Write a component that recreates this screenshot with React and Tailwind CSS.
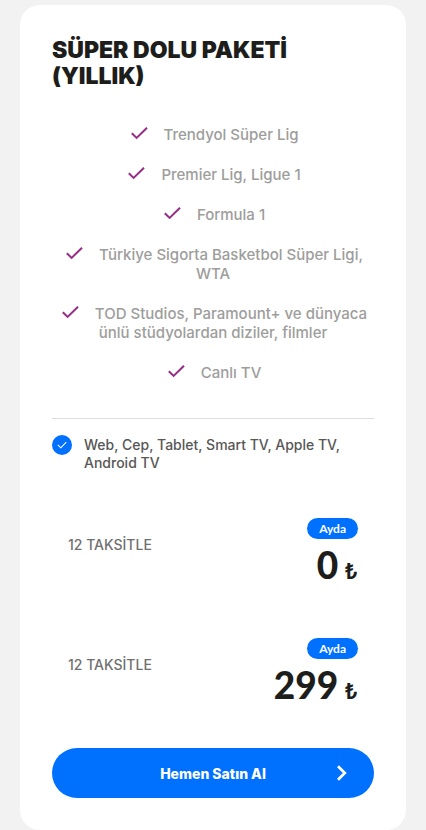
import React from 'react';

const features = [
    'Trendyol Süper Lig',
    'Premier Lig, Ligue 1',
    'Formula 1',
    'Türkiye Sigorta Basketbol Süper Ligi, WTA',
    'TOD Studios, Paramount+ ve dünyaca ünlü stüdyolardan diziler, filmler',
    'Canlı TV',
];

const prices = [
    { id: 'first', label: '12 TAKSİTLE', amount: '0' },
    { id: 'next', label: '12 TAKSİTLE', amount: '299' },
];

export default function App() {
    return (
        <main className="min-h-screen bg-[#f2f2f2] px-5 pt-[5px] font-['Inter',sans-serif] text-[#1d1d1b]">
            <article className="rounded-[20px] bg-white px-8 pt-8 pb-8">
                <h2 className="text-[23px] leading-[26px] font-black">
                    SÜPER DOLU PAKETİ (YILLIK)
                </h2>

                {/* Features */}
                <ul className="mt-9 flex flex-col gap-[21px] text-center text-[15px] leading-[19px] font-medium text-[#9d9d9b]">
                    {features.map(feature => (
                        <li key={feature}>
                            <CheckIcon />
                            {feature}
                        </li>
                    ))}
                </ul>

                {/* Devices */}
                <div className="mt-9 flex items-start gap-3 border-t border-[#dedede] pt-4">
                    <span className="flex size-5 shrink-0 items-center justify-center rounded-full bg-[#0070ff]">
                        <svg viewBox="0 0 10 8" className="h-2 w-2.5" fill="none" stroke="white" strokeWidth="1.1">
                            <path d="M0.8 3.8 L3.8 6.8 L9.3 1.2" />
                        </svg>
                    </span>
                    <p className="pt-px text-[14px] leading-[18px] font-medium text-[#575756]">
                        Web, Cep, Tablet, Smart TV, Apple TV, Android TV
                    </p>
                </div>

                {/* Prices */}
                <div className="mt-[46px] flex flex-col gap-12 px-4">
                    {prices.map(price => (
                        <PriceRow key={price.id} label={price.label} amount={price.amount} />
                    ))}
                </div>

                <button
                    type="button"
                    className="mt-[38px] grid h-[50px] w-full cursor-pointer grid-cols-[1fr_auto_1fr] items-center rounded-full bg-[#0070ff] px-6 text-[14px] font-extrabold text-white"
                >
                    <span className="col-start-2">Hemen Satın Al</span>
                    <svg viewBox="0 0 16 16" className="size-4 justify-self-end" fill="none" stroke="white" strokeWidth="2.7">
                        <path d="M4 1.2 L10.8 8 L4 14.8" />
                    </svg>
                </button>
            </article>
        </main>
    );
}

function CheckIcon() {
    return (
        <svg viewBox="0 0 24 13" className="mr-3 inline-block h-[13px] w-6 align-baseline" fill="none" stroke="#952d88" strokeWidth="2">
            <path d="M3.8 6.2 L8.6 10.9 L19 0.7" />
        </svg>
    );
}

function PriceRow({ label, amount }) {
    return (
        <div className="flex items-start justify-between">
            <span className="pt-[18px] text-[14px] leading-[18px] font-medium text-[#706f6f]">{label}</span>
            <div className="flex flex-col items-end">
                <span className="rounded-full bg-[#0070ff] px-3 font-['Lato',sans-serif] text-[12px] leading-[21px] font-bold text-white">
                    Ayda
                </span>
                <p className="flex items-baseline gap-1.5 font-['Lato',sans-serif] text-[37px] leading-[51px] font-black">
                    <span>{amount}</span>
                    <span className="font-['Inter',sans-serif] text-[22px] leading-none font-semibold">₺</span>
                </p>
            </div>
        </div>
    );
}
